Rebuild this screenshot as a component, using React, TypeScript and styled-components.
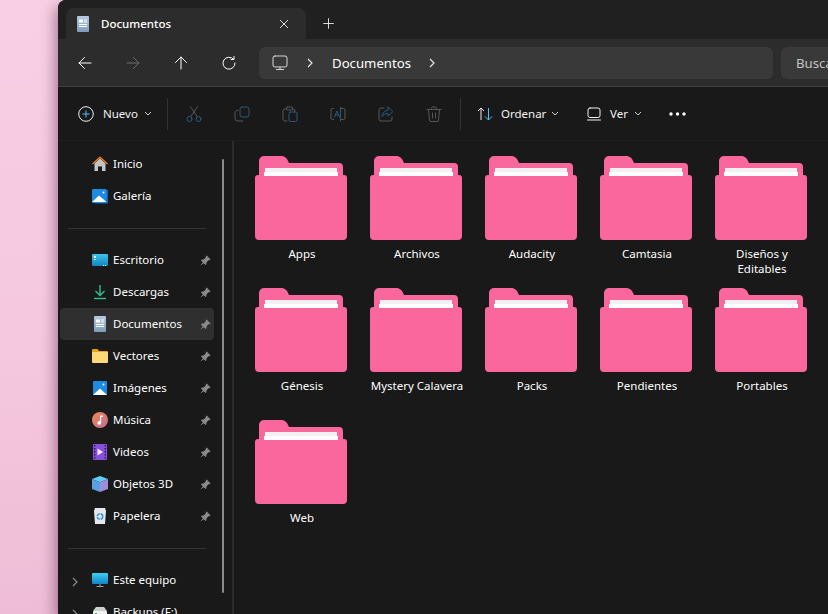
import React from 'react';
import styled, { createGlobalStyle } from 'styled-components';

const Global = createGlobalStyle`
  html, body { margin: 0; height: 100%; overflow: hidden; }
  body { background: #f8d0e4; font-family: "Noto Sans", "Open Sans", sans-serif; }
  #root { height: 100%; }
`;
const Page = styled.div`
  width: 828px; height: 614px; overflow: hidden; padding-left: 58px; box-sizing: border-box;
  background: linear-gradient(180deg, #f8cfe4 0%, #f5c8df 55%, #eebcd6 100%);
`;
const Win = styled.div`
  width: 770px; height: 614px; border-radius: 8px 0 0 0; background: #191919; overflow: hidden;
  box-shadow: -3px 6px 14px rgba(90, 40, 70, .5); display: flex; flex-direction: column; position: relative;
`;
const TabBar = styled.div`
  height: 39px; flex: none; background: #202020; padding: 8px 0 0 8px; box-sizing: border-box; display: flex;
`;
const Tab = styled.div`
  width: 240px; height: 31px; background: #2c2c2c; border-radius: 8px 8px 0 0; display: flex; align-items: center;
  padding: 0 16px 0 11px; box-sizing: border-box; color: #fff; font-size: 11.5px; font-weight: 500;
`;
const TabTitle = styled.span`margin-left: 12px; flex: 1;`;
const TabPlus = styled.div`
  width: 44px; height: 31px; display: flex; align-items: center; justify-content: center;
`;
const NavBar = styled.div`
  height: 48px; flex: none; background: #2c2c2c; border-bottom: 1px solid #3f3f3f; box-sizing: border-box;
  display: flex; align-items: center; padding-left: 3px;
`;
const NavBtn = styled.div`
  width: 48px; height: 32px; display: flex; align-items: center; justify-content: center; flex: none;
`;
const Address = styled.div`
  margin-left: 6px; width: 514px; height: 32px; flex: none; border-radius: 6px; background: #393939; display: flex;
  align-items: center; color: #fff; font-size: 13.2px; padding-left: 13px; box-sizing: border-box;
`;
const CrumbSep = styled.span<{ $left: number; $right: number }>`
  display: flex; margin: 0 ${p => p.$right}px 0 ${p => p.$left}px;
`;
const Search = styled.div`
  margin-left: 8px; flex: 1; height: 32px; border-radius: 6px 0 0 6px; background: #393939; color: #c4c4c4; font-size: 13.2px;
  display: flex; align-items: center; padding-left: 15px; box-sizing: border-box; white-space: nowrap; overflow: hidden;
`;
const Toolbar = styled.div`
  height: 53px; flex: none; background: #191919; display: flex; align-items: center; padding-left: 12px; box-sizing: border-box;
  color: #f2f2f2; font-size: 11.5px;
`;
const ToolLabelBtn = styled.div<{ $w: number; $pad?: number }>`
  width: ${p => p.$w}px; height: 32px; display: flex; align-items: center; flex: none;
  padding-left: ${p => p.$pad ?? 8}px; box-sizing: border-box;
`;
const ToolText = styled.span<{ $gap?: number; $after?: number }>`margin: 0 ${p => p.$after ?? 6}px 0 ${p => p.$gap ?? 9}px;`;
const ToolSep = styled.div`width: 1px; height: 32px; background: #333; flex: none; margin: 0 2px;`;
const ToolIcon = styled.div`width: 48px; height: 32px; display: flex; align-items: center; justify-content: center; flex: none;`;
const Body = styled.div`flex: 1; display: flex; min-height: 0; border-top: 1px solid #1f1f1f;`;
const Side = styled.div`
  width: 172px; flex: none; border-right: 2px solid #2b2b2b; position: relative; padding: 7px 0 0 2px; box-sizing: content-box;
  overflow: hidden; color: #fff; font-size: 11.5px;
`;
const SideRow = styled.div<{ $sel?: boolean }>`
  width: 154px; height: 32px; flex: none; display: flex; align-items: center; border-radius: 4px; position: relative;
  padding-left: 31px; box-sizing: border-box; background: ${p => p.$sel ? '#2f2f2f' : 'transparent'};
`;
const SideIcon = styled.div`width: 18px; height: 18px; flex: none; display: flex; align-items: center; justify-content: center;`;
const SideLabel = styled.span`margin: 0 0 2px 4px; flex: 1;`;
const Pin = styled.div`width: 14px; display: flex; margin-right: 2px; justify-content: center;`;
const Expand = styled.div`position: absolute; left: 12px; top: 11px;`;
const Divider = styled.div`width: 138px; height: 1px; background: #343434; margin: 16px 0 15px 8px;`;
const ScrollThumb = styled.div`
  position: absolute; left: 164px; top: 18px; width: 2px; height: 434px; background: #8a8a8a; border-radius: 1px;
`;
const Grid = styled.div`
  flex: 1; display: grid; grid-template-columns: repeat(5, 115px); grid-auto-rows: 132px; padding: 15px 0 0 9.5px; align-content: start;
`;
const Tile = styled.div`display: flex; flex-direction: column; align-items: center;`;
const TileIcon = styled.svg`display: block; flex: none;`;
const TileLabel = styled.div`
  width: 100px; padding-left: 2px; text-align: center; color: #fff; font-size: 11.5px; line-height: 15px; margin-top: 6px;
`;

const Stroke = ({ s = 16, c = '#fff', w = 1, children }: { s?: number; c?: string; w?: number; children: React.ReactNode }) => (
  <svg width={s} height={s} viewBox="0 0 16 16" fill="none" stroke={c} strokeWidth={w} strokeLinecap="round" strokeLinejoin="round">{children}</svg>
);
const Chev = ({ c = '#d0d0d0' }: { c?: string }) => (
  <svg width="8" height="5" viewBox="0 0 8 5" fill="none" stroke={c} strokeWidth="1"><path d="M1 1l3 3 3-3" /></svg>
);
const RightChev = ({ c = '#e4e4e4' }: { c?: string }) => (
  <svg width="6" height="10" viewBox="0 0 6 10" fill="none" stroke={c} strokeWidth="1.2"><path d="M1 1l4 4-4 4" /></svg>
);
const DocIcon = ({ h = 16 }: { h?: number }) => (
  <svg width={h * .75} height={h} viewBox="0 0 12 16">
    <defs><linearGradient id="dg" x1="0" x2="0" y1="0" y2="1"><stop offset="0" stopColor="#b6c9e4" /><stop offset="1" stopColor="#7f9cbd" /></linearGradient></defs>
    <rect width="12" height="16" rx="1" fill="url(#dg)" />
    <path d="M2 3.500h4v3H2zM7 3.500h3v1H7zM7 5.500h3v1H7zM2 8h8v1H2zM2 10h8v1H2z" fill="#fff" />
  </svg>
);
const PinIcon = () => (
  <svg width="11" height="11" viewBox="0 0 11 11" fill="#8b8b8b">
    <path d="M6.600.4l4 4-1 .9-.8-.2L6.600 7.300l-.2 1.900-.9.8L1 5.500l.8-.9 1.900-.2 2.200-2.200-.2-.8z" /><path d="M3 7L.3 10.700 4 8z" />
  </svg>
);
const Home = () => (
  <svg width="16" height="16" viewBox="0 0 16 16">
    <path d="M2.500 7.500L8 2.500l5.500 5V15H10v-4.500H6V15H2.500z" fill="#c4c4c4" /><path d="M0 7.500L8 .3l8 7.200-1 1L8 2.300 1 8.500z" fill="#e8791d" />
  </svg>
);
const Photo = ({ stack }: { stack?: boolean }) => (
  <svg width="16" height="16" viewBox="0 0 16 16">
    {stack && <path d="M14 2h2v13.500H3v-1h11z" fill="#1565b5" />}
    <rect x={stack ? 0 : 1} y={1} width={stack ? 14.5 : 14} height={14} rx="1" fill="#1c8be0" />
    <path d={stack ? 'M0 14l7-6.500L14.500 14z' : 'M1 15l7-6.500L15 15z'} fill="#fff" /><circle cx="11.500" cy="4.500" r="1" fill="#fff" />
  </svg>
);
const Desktop = () => (
  <svg width="16" height="12" viewBox="0 0 16 12">
    <defs><linearGradient id="dk" x1="0" x2="0" y1="0" y2="1"><stop offset="0" stopColor="#3ec4e6" /><stop offset="1" stopColor="#1285c4" /></linearGradient></defs>
    <rect width="16" height="12" rx="1" fill="url(#dk)" /><path d="M2 2h2v2H2zM2 5h2v1H2zM11 11h1v1h-1zM13 11h1v1h-1z" fill="#e6f7ff" />
  </svg>
);
const Download = () => (
  <svg width="14" height="16" viewBox="0 0 14 16" fill="none" stroke="#2fbf8f" strokeWidth="1.400"><path d="M7 1v10M2.500 7L7 11.500 11.500 7" /><path d="M1 14.500h12" /></svg>
);
const YellowFolder = () => (
  <svg width="16" height="14" viewBox="0 0 16 14"><path d="M0 1a1 1 0 011-1h4.500l1.500 2h8a1 1 0 011 1v2H0z" fill="#e8a317" /><rect y="3" width="16" height="11" rx="1" fill="#fcd977" /></svg>
);
const Music = () => (
  <svg width="16" height="16" viewBox="0 0 16 16">
    <defs><linearGradient id="mu" x1="0" x2="1" y1="0" y2="1"><stop offset="0" stopColor="#ea8a4e" /><stop offset="1" stopColor="#c76a94" /></linearGradient></defs>
    <circle cx="8" cy="8" r="8" fill="url(#mu)" /><path d="M8 3.500h3v1.600H9.200v5.700a1.900 1.900 0 11-1.200-1.700z" fill="#fff" />
  </svg>
);
const Video = () => (
  <svg width="14" height="16" viewBox="0 0 14 16">
    <rect width="14" height="16" rx="1" fill="#8a4fd8" /><path d="M1 1h1.500v1.500H1zM1 4h1.500v1.500H1zM1 7h1.500v1.500H1zM1 10h1.500v1.500H1zM1 13h1.500v1.500H1zM11.500 1H13v1.500h-1.500zM11.500 4H13v1.500h-1.500zM11.500 7H13v1.500h-1.500zM11.500 10H13v1.500h-1.500zM11.500 13H13v1.500h-1.500z" fill="#2f1b63" /><path d="M4.500 4.500L10 8l-5.500 3.500z" fill="#f1e6ff" />
  </svg>
);
const Cube = () => (
  <svg width="16" height="16" viewBox="0 0 16 16">
    <path d="M8 0l8 3-8 3.200L0 3z" fill="#62cdf2" /><path d="M0 3l8 3.200V16l-8-3z" fill="#5a9fe2" /><path d="M16 3L8 6.200V16l8-3z" fill="#9a8fd8" />
  </svg>
);
const Bin = () => (
  <svg width="12" height="16" viewBox="0 0 12 16">
    <path d="M1 0h10l1 3-1 13H1L0 3z" fill="#e4e8ec" /><circle cx="6" cy="8.500" r="2.800" fill="none" stroke="#2491e0" strokeWidth="1.500" strokeDasharray="3.500 1" />
  </svg>
);
const Monitor = () => (
  <svg width="16" height="14" viewBox="0 0 16 14">
    <defs><linearGradient id="mo" x1="0" x2="0" y1="0" y2="1"><stop offset="0" stopColor="#3fd0ee" /><stop offset="1" stopColor="#0f84c9" /></linearGradient></defs>
    <rect width="16" height="11" rx="1" fill="url(#mo)" /><path d="M7.500 11h1v2h-1zM4.500 13h7v1h-7z" fill="#9aa5ad" />
  </svg>
);
const Drive = () => (
  <svg width="14" height="10" viewBox="0 0 14 10"><path d="M3 0h8l3 4H0z" fill="#cfcfcf" /><rect y="4" width="14" height="6" rx="1" fill="#f2f2f2" /><rect x="2" y="6" width="2" height="2" fill="#3fae49" /></svg>
);
const Folder = () => (
  <TileIcon width="92" height="84" viewBox="0 0 92 84">
    <path d="M4 5a5 5 0 015-5h17c4 0 6 2 8 7h50a4 4 0 014 4v20H4z" fill="#f9679d" />
    <rect x="10" y="12" width="72" height="4" fill="#f3f0f2" />
    <rect x="9" y="16" width="74" height="4" fill="#fff" />
    <path d="M0 22a3 3 0 013-3h5l1 1h74l1-1h5a3 3 0 013 3v58a4 4 0 01-4 4H4a4 4 0 01-4-4z" fill="#f9679d" />
  </TileIcon>
);

const rows1 = [['Inicio', <Home />], ['Galería', <Photo stack />]] as const;
const rows2: [string, React.ReactNode][] = [
  ['Escritorio', <Desktop />], ['Descargas', <Download />], ['Documentos', <DocIcon />], ['Vectores', <YellowFolder />],
  ['Imágenes', <Photo />], ['Música', <Music />], ['Videos', <Video />], ['Objetos 3D', <Cube />], ['Papelera', <Bin />],
];
const folders = ['Apps', 'Archivos', 'Audacity', 'Camtasia', 'Diseños y Editables', 'Génesis', 'Mystery Calavera', 'Packs', 'Pendientes', 'Portables', 'Web'];
const dim = '#585858';
const dimBlue = '#275a7c';

export default function App() {
  return (
    <Page>
      <Global />
      <Win>
        <TabBar>
          <Tab>
            <DocIcon />
            <TabTitle>Documentos</TabTitle>
            <Stroke s={12} w={1.1}><path d="M3 3l10 10M13 3L3 13" /></Stroke>
          </Tab>
          <TabPlus><Stroke s={13}><path d="M8 2v12M2 8h12" /></Stroke></TabPlus>
        </TabBar>
        <NavBar>
          <NavBtn><Stroke><path d="M14 8H2M7.500 2.500L2 8l5.500 5.500" /></Stroke></NavBtn>
          <NavBtn><Stroke c="#6e6e6e"><path d="M2 8h12M8.500 2.500L14 8l-5.500 5.500" /></Stroke></NavBtn>
          <NavBtn><Stroke><path d="M8 14V2M2.500 7.500L8 2l5.500 5.500" /></Stroke></NavBtn>
          <NavBtn><Stroke><path d="M12.500 4.200A6 6 0 1014 8M13 1.500v3h-3" /></Stroke></NavBtn>
          <Address>
            <Stroke c="#d8d8d8"><rect x="1" y="1" width="14" height="11" rx="2" /><path d="M8 12v2M4.500 14.500h7" /></Stroke>
            <CrumbSep $left={19} $right={19}><RightChev /></CrumbSep>
            <span>Documentos</span>
            <CrumbSep $left={18} $right={0}><RightChev /></CrumbSep>
          </Address>
          <Search>Buscar en Documentos</Search>
        </NavBar>
        <Toolbar>
          <ToolLabelBtn $w={95}>
            <svg width="16" height="16" viewBox="0 0 16 16" fill="none"><circle cx="8" cy="8" r="7.300" stroke="#f0f0f0" /><path d="M8 4.500v7M4.500 8h7" stroke="#4cc2ff" /></svg>
            <ToolText>Nuevo</ToolText><Chev />
          </ToolLabelBtn>
          <ToolSep />
          <ToolIcon><Stroke c={dimBlue}><circle cx="3.500" cy="13" r="2.500" /><circle cx="12.500" cy="13" r="2.500" /><path d="M4.500 10.800L11.500 .8M11.500 10.800L4.500 .8" stroke={dim} /></Stroke></ToolIcon>
          <ToolIcon><Stroke c={dimBlue}><rect x="6" y="1" width="9" height="10" rx="2" /><path d="M4 4.200a2.500 2.500 0 00-3 2.500v5.500A2.800 2.800 0 003.800 15h5" stroke={dim} /></Stroke></ToolIcon>
          <ToolIcon><Stroke c={dim}><path d="M10 3h1a2 2 0 012 2v1M5 15H3a2 2 0 01-2-2V5a2 2 0 012-2h1" /><rect x="4.500" y="1" width="6" height="3" rx="1" /><rect x="7" y="6" width="8" height="9.500" rx="1.500" stroke={dimBlue} /></Stroke></ToolIcon>
          <ToolIcon><Stroke c={dim}><path d="M3.500 2.500H2.500A1.500 1.500 0 001 4v8a1.500 1.500 0 001.500 1.500h1M11 2.500h2.500A1.500 1.500 0 0115 4v8a1.500 1.500 0 01-1.500 1.500H11" /><path d="M4.500 11L7 5l2.500 6M5.300 9h3.400M10.500 1v14" stroke={dimBlue} /></Stroke></ToolIcon>
          <ToolIcon><Stroke c={dim}><path d="M6 2H3a2 2 0 00-2 2v9a2 2 0 002 2h9a2 2 0 002-2v-2" /><path d="M10 1l5 4.500L10 10V7.500c-3 0-4.500 1-6 3 .3-3.500 2.500-6 6-6.500z" stroke={dimBlue} /></Stroke></ToolIcon>
          <ToolIcon><Stroke c={dim}><path d="M1 3.500h14M5.500 3.500V2.500A1.500 1.500 0 017 1h2a1.500 1.500 0 011.500 1.500v1M2.500 3.500l1 10.500a1.500 1.500 0 001.500 1.500h6a1.500 1.500 0 001.500-1.500l1-10.500M6.500 7v5M9.500 7v5" /></Stroke></ToolIcon>
          <ToolSep />
          <ToolLabelBtn $w={115} $pad={14}>
            <svg width="16" height="16" viewBox="0 0 16 16" fill="none" strokeWidth="1"><path d="M4 14V2M1 5l3-3 3 3" stroke="#e8e8e8" /><path d="M11.500 2v12M8 10.500l3.500 3.500 3.500-3.500" stroke="#4cc2ff" /></svg>
            <ToolText $gap={8} $after={5}>Ordenar</ToolText><Chev />
          </ToolLabelBtn>
          <ToolLabelBtn $w={88}>
            <Stroke c="#f0f0f0"><rect x="2" y="2" width="12" height="9.500" rx="2" /><path d="M1.500 14h13" /></Stroke>
            <ToolText $gap={8}>Ver</ToolText><Chev />
          </ToolLabelBtn>
          <ToolLabelBtn $w={40} $pad={3}>
            <svg width="17" height="4" viewBox="0 0 17 4" fill="#fff"><circle cx="2" cy="2" r="1.700" /><circle cx="8.500" cy="2" r="1.700" /><circle cx="15" cy="2" r="1.700" /></svg>
          </ToolLabelBtn>
        </Toolbar>
        <Body>
          <Side>
            {rows1.map(([l, i]) => (
              <SideRow key={l}><SideIcon>{i}</SideIcon><SideLabel>{l}</SideLabel></SideRow>
            ))}
            <Divider />
            {rows2.map(([l, i]) => (
              <SideRow key={l} $sel={l === 'Documentos'}><SideIcon>{i}</SideIcon><SideLabel>{l}</SideLabel><Pin><PinIcon /></Pin></SideRow>
            ))}
            <Divider />
            <SideRow><Expand><RightChev c="#8a8a8a" /></Expand><SideIcon><Monitor /></SideIcon><SideLabel>Este equipo</SideLabel></SideRow>
            <SideRow><Expand><RightChev c="#8a8a8a" /></Expand><SideIcon><Drive /></SideIcon><SideLabel>Backups (F:)</SideLabel></SideRow>
            <ScrollThumb />
          </Side>
          <Grid>
            {folders.map(f => (
              <Tile key={f}><Folder /><TileLabel>{f}</TileLabel></Tile>
            ))}
          </Grid>
        </Body>
      </Win>
    </Page>
  );
}
